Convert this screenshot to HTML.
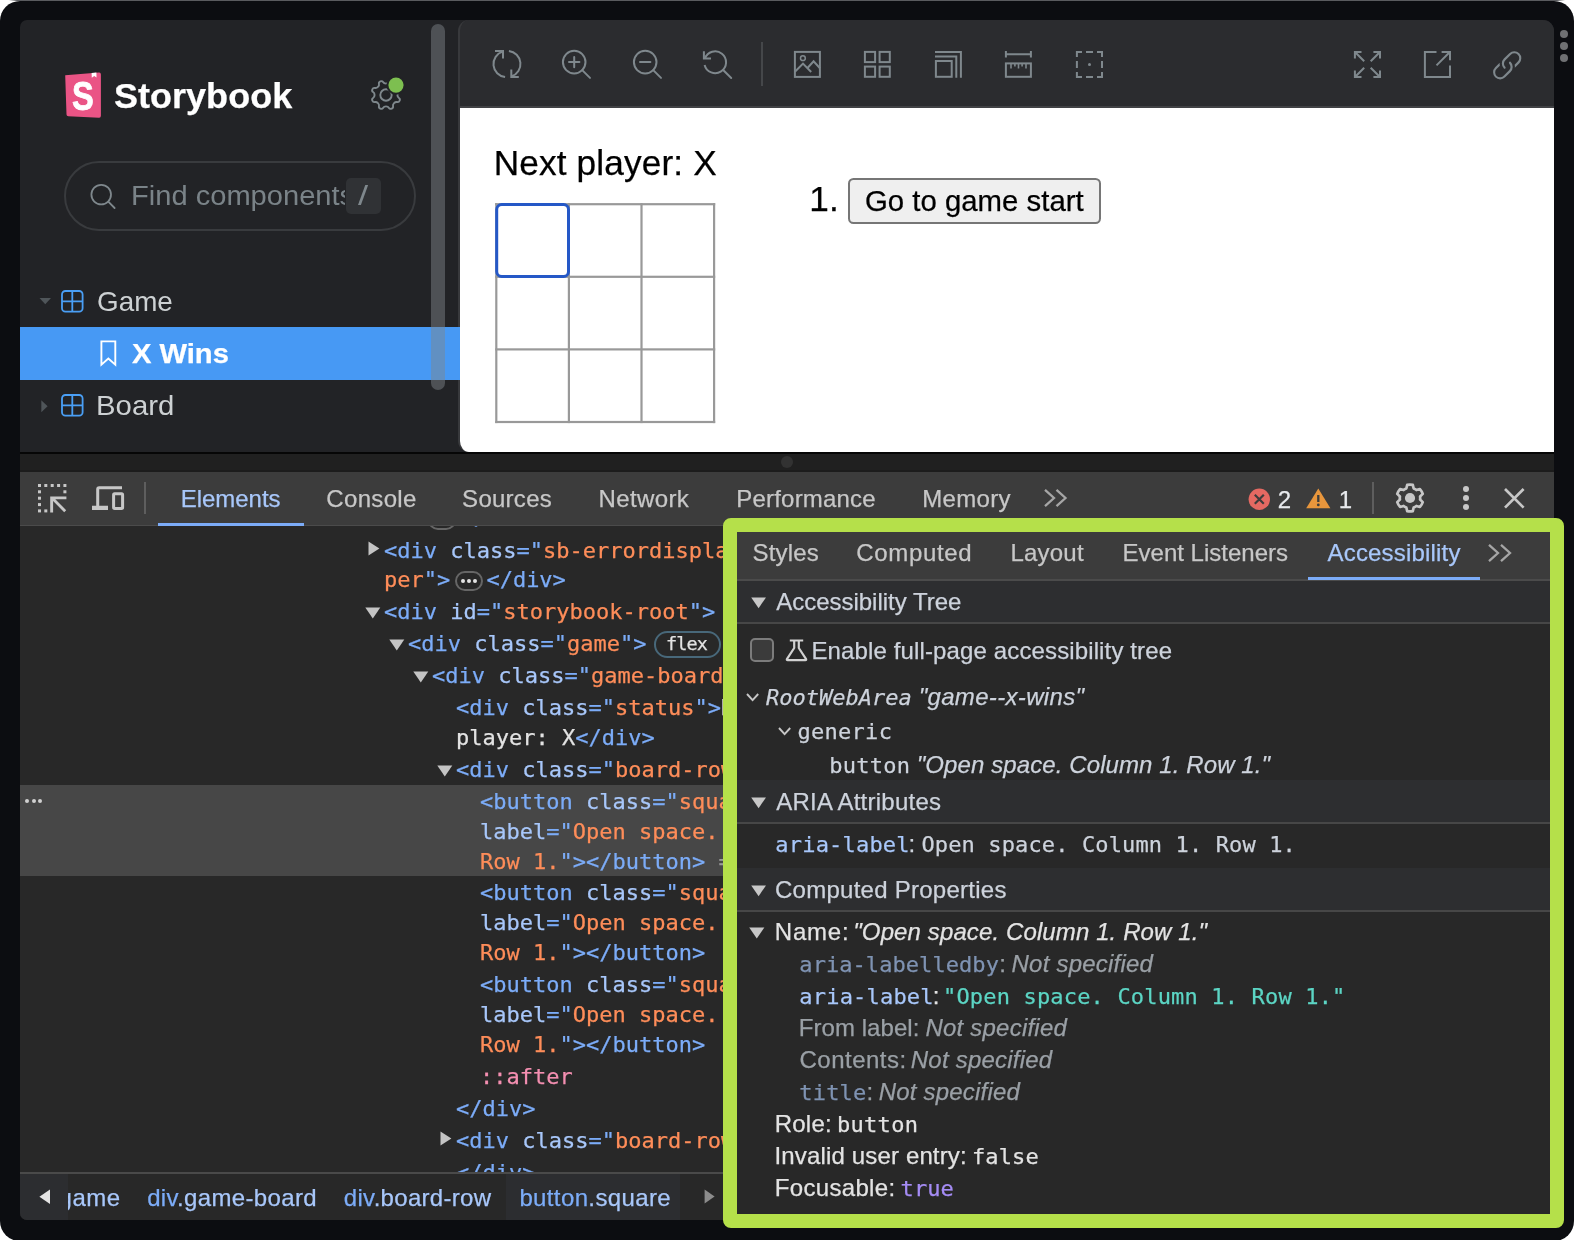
<!DOCTYPE html>
<html lang="en"><head><meta charset="utf-8"><title>Storybook</title><style>
html,body{margin:0;padding:0}
body{width:1574px;height:1240px;position:relative;overflow:hidden;background:#fff;font-family:"Liberation Sans",sans-serif}
#root{position:absolute;left:0;top:0;width:1574px;height:1240px;will-change:transform}
.a{position:absolute;box-sizing:border-box}
.t{position:absolute;white-space:pre;line-height:0;-webkit-text-stroke:0.25px}
.clip{position:absolute;overflow:hidden}
svg{overflow:visible}
</style></head><body>
<div id="root">
<div class="a" style="left:0px;top:0px;width:1574px;height:1px;background:linear-gradient(90deg,#fff 0,#fff 9px,#5a5b5f 17px,#5a5b5f 1557px,#fff 1565px);"></div>
<div class="a" style="left:0px;top:1px;width:1574px;height:1240px;background:#0c0d11;border-radius:20px;"></div>
<div class="a" style="left:20px;top:20px;width:1534px;height:432px;background:#222326;border-radius:7px 11px 0 0;"></div>
<div class="a" style="left:458px;top:20px;width:1096px;height:432px;background:#2b2c2f;border-radius:11px 11px 0 11px;overflow:hidden;border-left:2px solid #38393c;"><div class="a" style="left:0;top:86px;width:1100px;height:1.6px;background:#414245"></div><div class="a" style="left:0;top:87.6px;width:1100px;height:350px;background:#fff"></div></div>
<svg class="a" style="left:64px;top:71.5px;" width="37.5" height="46.5" viewBox="0 0 37.5 46.5"><path d="M1.2 3.2 L35 0.6 Q36.9 0.5 36.9 2.4 L36.9 43.8 Q36.9 45.8 35 45.7 L4.3 44.3 Q2.6 44.2 2.5 42.5 Z" fill="#ea5485"/><path d="M27.6 0.9 L32.4 0.6 L32.5 5.6 L30.2 3.9 L27.8 5.8 Z" fill="#fff"/></svg>
<div class="t" style="left:72.30px;top:96px;font:700 41px/0 'Liberation Sans',sans-serif;color:#fff;transform:scaleX(0.7971);transform-origin:0 0;-webkit-text-stroke:0.8px #fff;">S</div>
<div class="t" style="left:114.21px;top:96px;font:700 35.5px/0 'Liberation Sans',sans-serif;color:#fff;transform:scaleX(1.0151);transform-origin:0 0;">Storybook</div>
<svg class="a" style="left:369.5px;top:78.5px;" width="32" height="32" viewBox="0 0 32 32"><path d="M27.41 16.00 Q27.41 18.08 28.91 18.95 Q30.40 19.82 29.64 21.65 Q28.88 23.48 27.21 23.04 Q25.54 22.60 24.07 24.07 Q22.60 25.54 23.04 27.21 Q23.48 28.88 21.65 29.64 Q19.82 30.40 18.95 28.91 Q18.08 27.41 16.00 27.41 Q13.92 27.41 13.05 28.91 Q12.18 30.40 10.35 29.64 Q8.52 28.88 8.96 27.21 Q9.40 25.54 7.93 24.07 Q6.46 22.60 4.79 23.04 Q3.12 23.48 2.36 21.65 Q1.60 19.82 3.09 18.95 Q4.59 18.08 4.59 16.00 Q4.59 13.92 3.09 13.05 Q1.60 12.18 2.36 10.35 Q3.12 8.52 4.79 8.96 Q6.46 9.40 7.93 7.93 Q9.40 6.46 8.96 4.79 Q8.52 3.12 10.35 2.36 Q12.18 1.60 13.05 3.09 Q13.92 4.59 16.00 4.59 Q18.08 4.59 18.95 3.09 Q19.82 1.60 21.65 2.36 Q23.48 3.12 23.04 4.79 Q22.60 6.46 24.07 7.93 Q25.54 9.40 27.21 8.96 Q28.88 8.52 29.64 10.35 Q30.40 12.18 28.91 13.05 Q27.41 13.92 27.41 16.00Z" fill="none" stroke="#7f888d" stroke-width="1.9" stroke-linejoin="round"/><circle cx="16" cy="16" r="5.7" fill="none" stroke="#7f888d" stroke-width="1.9"/><circle cx="26" cy="6.1" r="9.6" fill="#222326"/><circle cx="26" cy="6.1" r="7.6" fill="#7dbf50"/></svg>
<div class="a" style="left:64px;top:161px;width:352px;height:70px;border:2px solid #393b3e;border-radius:35px;"></div>
<svg class="a" style="left:88px;top:181px;" width="30" height="30" viewBox="0 0 30 30"><circle cx="13.2" cy="13.6" r="9.8" fill="none" stroke="#7f888d" stroke-width="1.8"/><path d="M20.3 20.7 L26.6 27" stroke="#7f888d" stroke-width="1.8" stroke-linecap="round"/></svg>
<div class="clip" style="left:120px;top:170px;width:225px;height:50px">
<div class="t" style="left:11.27px;top:26px;font:400 27.5px/0 'Liberation Sans',sans-serif;color:#7a8388;transform:scaleX(1.0578);transform-origin:0 0;-webkit-text-stroke:0;">Find components</div>
</div>
<div class="a" style="left:346px;top:178px;width:35px;height:35.5px;background:#303235;border-radius:5px;"></div>
<div class="t" style="left:357.50px;top:196px;font:400 28px/0 'Liberation Sans',sans-serif;color:#7f888d;transform:scaleX(1.3008);transform-origin:0 0;-webkit-text-stroke:0;">/</div>
<svg class="a" style="left:38.5px;top:298px;" width="13" height="7" viewBox="0 0 13 7"><path d="M0.5 0H12L6.25 6.3Z" fill="#4f5559"/></svg>
<svg class="a" style="left:61px;top:290px;" width="23" height="23" viewBox="0 0 23 23"><rect x="1" y="1" width="20.6" height="20.6" rx="3.4" fill="none" stroke="#4a9ff5" stroke-width="1.8"/><path d="M11.3 1V21.6M1 11.3H21.6" stroke="#4a9ff5" stroke-width="1.8"/></svg>
<div class="t" style="left:96.51px;top:302px;font:400 28px/0 'Liberation Sans',sans-serif;color:#cdd1d3;transform:scaleX(0.9940);transform-origin:0 0;-webkit-text-stroke:0;">Game</div>
<div class="a" style="left:20px;top:327px;width:440px;height:53px;background:#4799f4;"></div>
<svg class="a" style="left:99.5px;top:339.5px;" width="17" height="27" viewBox="0 0 17 27"><path d="M1.4 1.4H15.3V24.6L8.35 18.6L1.4 24.6Z" fill="none" stroke="#fff" stroke-width="1.9" stroke-linejoin="miter"/></svg>
<div class="t" style="left:132.28px;top:354px;font:700 28px/0 'Liberation Sans',sans-serif;color:#fff;transform:scaleX(1.0407);transform-origin:0 0;">X Wins</div>
<svg class="a" style="left:41px;top:400px;" width="8" height="13" viewBox="0 0 8 13"><path d="M0.3 0.3V12.2L6.6 6.25Z" fill="#4f5559"/></svg>
<svg class="a" style="left:61px;top:394px;" width="23" height="23" viewBox="0 0 23 23"><rect x="1" y="1" width="20.6" height="20.6" rx="3.4" fill="none" stroke="#4a9ff5" stroke-width="1.8"/><path d="M11.3 1V21.6M1 11.3H21.6" stroke="#4a9ff5" stroke-width="1.8"/></svg>
<div class="t" style="left:95.55px;top:406px;font:400 28px/0 'Liberation Sans',sans-serif;color:#cdd1d3;transform:scaleX(1.0481);transform-origin:0 0;-webkit-text-stroke:0;">Board</div>
<div class="a" style="left:431px;top:24px;width:14px;height:366px;background:rgba(128,134,138,0.47);border-radius:7px;"></div>
<svg class="a" style="left:492.5px;top:50.4px;" width="28" height="28" viewBox="0 0 28 28"><g fill="none" stroke="#7f888d" stroke-width="2.0" stroke-linecap="butt" stroke-linejoin="miter"><path d="M12.1 27.1 A13.1 13.1 0 0 1 9.6 1.6"/><path d="M2 0.9H10V8.6"/><path d="M15.9 0.9 A13.1 13.1 0 0 1 18.6 26.3"/><path d="M18.3 19.4V27.1H25.8"/></g></svg>
<svg class="a" style="left:562px;top:50px;" width="28" height="28" viewBox="0 0 28 28"><g fill="none" stroke="#7f888d" stroke-width="2.0" stroke-linecap="butt" stroke-linejoin="miter"><circle cx="12.2" cy="12.1" r="11.3"/><path d="M20.2 20.1L28 27.9" stroke-linecap="round"/><path d="M7 12.1H17.4M12.2 6.9V17.3" stroke-linecap="round"/></g></svg>
<svg class="a" style="left:633px;top:50px;" width="28" height="28" viewBox="0 0 28 28"><g fill="none" stroke="#7f888d" stroke-width="2.0" stroke-linecap="butt" stroke-linejoin="miter"><circle cx="12.2" cy="12.1" r="11.3"/><path d="M20.2 20.1L28 27.9" stroke-linecap="round"/><path d="M7 12.1H17.4" stroke-linecap="round"/></g></svg>
<svg class="a" style="left:703px;top:50px;" width="28" height="28" viewBox="0 0 28 28"><g fill="none" stroke="#7f888d" stroke-width="2.0" stroke-linecap="butt" stroke-linejoin="miter"><path d="M1.9 8.6 A10.9 10.9 0 1 1 1.6 14.9"/><path d="M0.9 1.2V8.4H8"/><path d="M20.4 20.2L28.2 28" stroke-linecap="round"/></g></svg>
<div class="a" style="left:761px;top:42px;width:2px;height:44px;background:#45474a;"></div>
<svg class="a" style="left:794px;top:51px;" width="27" height="27" viewBox="0 0 27 27"><g fill="none" stroke="#7f888d" stroke-width="2.0" stroke-linecap="butt" stroke-linejoin="miter"><rect x="0.9" y="0.9" width="25" height="25"/><circle cx="8.9" cy="7.2" r="2.4" stroke-width="1.5"/><path d="M0.9 20.8L9 12.6L17.2 21"/><path d="M13.5 17L19.6 10.3L26 17.2"/></g></svg>
<svg class="a" style="left:864px;top:51px;" width="27" height="27" viewBox="0 0 27 27"><g fill="none" stroke="#7f888d" stroke-width="2.0" stroke-linecap="butt" stroke-linejoin="miter"><rect x="0.9" y="0.9" width="10.2" height="10.2"/><rect x="15.6" y="0.9" width="10.2" height="10.2"/><rect x="0.9" y="15.6" width="10.2" height="10.2"/><rect x="15.6" y="15.6" width="10.2" height="10.2"/></g></svg>
<svg class="a" style="left:935px;top:51px;" width="27" height="27" viewBox="0 0 27 27"><g fill="none" stroke="#7f888d" stroke-width="2.0" stroke-linecap="butt" stroke-linejoin="miter"><rect x="0.9" y="10" width="15.8" height="15.8"/><path d="M0 5.6H21.3V26.7"/><path d="M0 0.9H25.9V26.7"/></g></svg>
<svg class="a" style="left:1005px;top:51px;" width="27" height="27" viewBox="0 0 27 27"><g fill="none" stroke="#7f888d" stroke-width="2.0" stroke-linecap="butt" stroke-linejoin="miter"><path d="M0.9 0V6.6M25.9 0V6.6M0.9 3.3H25.9"/><rect x="0.9" y="12.4" width="25" height="13.4"/><path d="M6 12.4V17.5M9.9 12.4V15.6M13.5 12.4V17.5M17.1 12.4V15.6M21 12.4V17.5" stroke-width="1.6"/></g></svg>
<svg class="a" style="left:1076px;top:51px;" width="27" height="27" viewBox="0 0 27 27"><g fill="none" stroke="#7f888d" stroke-width="2.0" stroke-linecap="butt" stroke-linejoin="miter"><path d="M0.9 6V0.9H6M10 0.9H17M21 0.9H26V6M26 10V17M26 21V26H21M17 26H10M6 26H0.9V21M0.9 17V10"/><circle cx="13.5" cy="13.5" r="1.5" fill="#7f888d" stroke="none"/></g></svg>
<svg class="a" style="left:1354px;top:51px;" width="27" height="27" viewBox="0 0 27 27"><g fill="none" stroke="#7f888d" stroke-width="2.0" stroke-linecap="butt" stroke-linejoin="miter"><path d="M0.9 7.5V0.9H7.5M1.2 1.2L10.2 10.2"/><path d="M19.4 0.9H26V7.5M25.7 1.2L16.7 10.2"/><path d="M0.9 19.4V26H7.5M1.2 25.7L10.2 16.7"/><path d="M19.4 26H26V19.4M25.7 25.7L16.7 16.7"/></g></svg>
<svg class="a" style="left:1424px;top:51px;" width="27" height="27" viewBox="0 0 27 27"><g fill="none" stroke="#7f888d" stroke-width="2.0" stroke-linecap="butt" stroke-linejoin="miter"><path d="M12.5 0.9H0.9V26H26V14.4"/><path d="M17.6 0.9H26V9.3M25.6 1.3L12.5 14.4"/></g></svg>
<svg class="a" style="left:1492px;top:49.5px;" width="30.5" height="30.5" viewBox="0 0 14 14"><g fill="#7f888d"><path d="M11.84 2.16a2.25 2.25 0 0 0-3.18 0l-2.5 2.5c-.88.88-.88 2.3 0 3.18a.5.5 0 0 1-.7.7 3.25 3.25 0 0 1 0-4.59l2.5-2.5a3.25 3.25 0 0 1 4.59 4.6L10.48 8.1c.04-.44.01-.89-.09-1.32l1.45-1.45c.88-.88.88-2.3 0-3.18Z"/><path d="M3.6 7.2c-.1-.42-.12-.87-.08-1.31L1.45 7.95a3.25 3.25 0 1 0 4.6 4.6l2.5-2.5a3.25 3.25 0 0 0 0-4.6.5.5 0 0 0-.7.7c.87.89.87 2.31 0 3.19l-2.5 2.5a2.25 2.25 0 1 1-3.18-3.18L3.6 7.2Z"/></g></svg>
<div class="a" style="left:1560px;top:30px;width:8px;height:8px;background:#6f7073;border-radius:50%;"></div>
<div class="a" style="left:1560px;top:42px;width:8px;height:8px;background:#6f7073;border-radius:50%;"></div>
<div class="a" style="left:1560px;top:54px;width:8px;height:8px;background:#6f7073;border-radius:50%;"></div>
<div class="t" style="left:493.68px;top:163px;font:400 35.2px/0 'Liberation Sans',sans-serif;color:#000;letter-spacing:0.149px;">Next player: X</div>
<div class="t" style="left:809.36px;top:199px;font:400 35.2px/0 'Liberation Sans',sans-serif;color:#000;">1.</div>
<div class="a" style="left:848.3px;top:178.2px;width:252.4px;height:46.2px;background:#efefef;border:2.2px solid #767676;border-radius:5.5px;"></div>
<div class="t" style="left:865.03px;top:201px;font:400 29.33px/0 'Liberation Sans',sans-serif;color:#000;letter-spacing:0.013px;">Go to game start</div>
<svg class="a" style="left:0px;top:0px;" width="1574" height="1240" viewBox="0 0 1574 1240"><rect x="495.2" y="203.1" width="2.2" height="220.0" fill="#999"/><rect x="567.8" y="203.1" width="2.2" height="220.0" fill="#999"/><rect x="640.4" y="203.1" width="2.2" height="220.0" fill="#999"/><rect x="713.0" y="203.1" width="2.2" height="220.0" fill="#999"/><rect x="495.2" y="203.1" width="220.0" height="2.2" fill="#999"/><rect x="495.2" y="275.7" width="220.0" height="2.2" fill="#999"/><rect x="495.2" y="348.3" width="220.0" height="2.2" fill="#999"/><rect x="495.2" y="420.9" width="220.0" height="2.2" fill="#999"/><rect x="496.7" y="204.6" width="71.8" height="71.8" rx="5" fill="#fff" stroke="#2558c7" stroke-width="3"/></svg>
<div class="a" style="left:20px;top:452px;width:1534px;height:1.5px;background:#060606;"></div>
<div class="a" style="left:20px;top:453.5px;width:1534px;height:16.5px;background:#202020;"></div>
<div class="a" style="left:20px;top:470px;width:1534px;height:2px;background:#1c1c1c;"></div>
<div class="a" style="left:780.9px;top:455.9px;width:12px;height:12px;background:#323232;border-radius:50%;"></div>
<div class="a" style="left:20px;top:472px;width:1534px;height:748px;background:#282828;border-radius:0 0 7px 7px;"></div>
<div class="a" style="left:20px;top:472px;width:1534px;height:53px;background:#3c3c3c;"></div>
<div class="a" style="left:20px;top:524.6px;width:1534px;height:1.6px;background:#4b4b4b;"></div>
<svg class="a" style="left:37.7px;top:483.8px;" width="29" height="29" viewBox="0 0 29 29"><g fill="#c7c7c7"><rect x="0" y="0" width="3" height="3"/><rect x="6.3" y="0" width="3" height="3"/><rect x="12.7" y="0" width="3" height="3"/><rect x="19.1" y="0" width="3" height="3"/><rect x="25.4" y="0" width="3" height="3"/><rect x="0" y="6.3" width="3" height="3"/><rect x="0" y="12.7" width="3" height="3"/><rect x="0" y="19.1" width="3" height="3"/><rect x="0" y="25.4" width="3" height="3"/><rect x="6.3" y="25.4" width="3" height="3"/><rect x="25.4" y="6.3" width="3" height="3"/><path d="M12.2 12.4H28.4V15.3H17.3L28.2 26.2L26.2 28.2L15.1 17.1V28.4H12.2Z"/></g></svg>
<svg class="a" style="left:92px;top:486px;" width="33" height="25" viewBox="0 0 33 25"><g fill="#c7c7c7"><path d="M4.2 3.2A3 3 0 0 1 7.2 0.2H30V3.2H7.2V19.8H16V24H0V19.8H4.2Z"/><path fill-rule="evenodd" d="M22.6 6.3H29.6A2.5 2.5 0 0 1 32.1 8.8V21.5A2.5 2.5 0 0 1 29.6 24H22.6A2.5 2.5 0 0 1 20.1 21.5V8.8A2.5 2.5 0 0 1 22.6 6.3ZM23.1 9.3V21H29.1V9.3Z"/></g></svg>
<div class="a" style="left:144.1px;top:482px;width:1.9px;height:32px;background:#5e5e5e;"></div>
<div class="t" style="left:180.68px;top:499px;font:400 24px/0 'Liberation Sans',sans-serif;color:#a8c7fa;letter-spacing:-0.023px;">Elements</div>
<div class="a" style="left:158px;top:523px;width:146px;height:3.2px;background:#7cacf8;"></div>
<div class="t" style="left:326.30px;top:499px;font:400 24px/0 'Liberation Sans',sans-serif;color:#c7c7c7;letter-spacing:0.333px;">Console</div>
<div class="t" style="left:462.12px;top:499px;font:400 24px/0 'Liberation Sans',sans-serif;color:#c7c7c7;letter-spacing:0.266px;">Sources</div>
<div class="t" style="left:598.48px;top:499px;font:400 24px/0 'Liberation Sans',sans-serif;color:#c7c7c7;letter-spacing:0.388px;">Network</div>
<div class="t" style="left:736.28px;top:499px;font:400 24px/0 'Liberation Sans',sans-serif;color:#c7c7c7;letter-spacing:0.200px;">Performance</div>
<div class="t" style="left:922.28px;top:499px;font:400 24px/0 'Liberation Sans',sans-serif;color:#c7c7c7;letter-spacing:0.324px;">Memory</div>
<svg class="a" style="left:1044px;top:489px;" width="24" height="18" viewBox="0 0 24 18"><path d="M1 0.8L10 9L1 17.2M12.5 0.8L21.5 9L12.5 17.2" fill="none" stroke="#a6a6a6" stroke-width="2.3"/></svg>
<svg class="a" style="left:1247.5px;top:487.5px;" width="23" height="23" viewBox="0 0 23 23"><circle cx="11.3" cy="11.3" r="10.7" fill="#e46962"/><path d="M6.8 6.8L15.8 15.8M15.8 6.8L6.8 15.8" stroke="#3c3c3c" stroke-width="2.2"/></svg>
<div class="t" style="left:1277.80px;top:500px;font:400 24px/0 'Liberation Sans',sans-serif;color:#e8eaed;">2</div>
<svg class="a" style="left:1306.4px;top:488.4px;" width="25" height="21" viewBox="0 0 25 21"><path d="M12.3 0.4L24.4 20.2H0.2Z" fill="#e8963c"/><path d="M12.3 7V14" stroke="#3c3c3c" stroke-width="2.3"/><circle cx="12.3" cy="16.9" r="1.4" fill="#3c3c3c"/></svg>
<div class="t" style="left:1338.80px;top:500px;font:400 24px/0 'Liberation Sans',sans-serif;color:#e8eaed;">1</div>
<div class="a" style="left:1372px;top:482px;width:1.9px;height:32px;background:#5e5e5e;"></div>
<svg class="a" style="left:1395px;top:483px;" width="30" height="30" viewBox="0 0 30 30"><path d="M11.31 5.49L12.21 1.89A13.4 13.4 0 0 1 17.79 1.89L18.69 5.49A10.2 10.2 0 0 1 21.39 7.05L24.95 6.03A13.4 13.4 0 0 1 27.75 10.87L25.08 13.44A10.2 10.2 0 0 1 25.08 16.56L27.75 19.13A13.4 13.4 0 0 1 24.95 23.97L21.39 22.95A10.2 10.2 0 0 1 18.69 24.51L17.79 28.11A13.4 13.4 0 0 1 12.21 28.11L11.31 24.51A10.2 10.2 0 0 1 8.61 22.95L5.05 23.97A13.4 13.4 0 0 1 2.25 19.13L4.92 16.56A10.2 10.2 0 0 1 4.92 13.44L2.25 10.87A13.4 13.4 0 0 1 5.05 6.03L8.61 7.05A10.2 10.2 0 0 1 11.31 5.49Z" fill="none" stroke="#c7c7c7" stroke-width="2.7" stroke-linejoin="round"/><circle cx="15" cy="15" r="5.1" fill="#c7c7c7"/></svg>
<div class="a" style="left:1463.2px;top:485.5px;width:6.2px;height:6.2px;background:#c7c7c7;border-radius:50%;"></div>
<div class="a" style="left:1463.2px;top:495.1px;width:6.2px;height:6.2px;background:#c7c7c7;border-radius:50%;"></div>
<div class="a" style="left:1463.2px;top:504.3px;width:6.2px;height:6.2px;background:#c7c7c7;border-radius:50%;"></div>
<svg class="a" style="left:1504px;top:488px;" width="21" height="21" viewBox="0 0 21 21"><path d="M1 1L19.6 19.6M19.6 1L1 19.6" stroke="#c7c7c7" stroke-width="2.7" fill="none"/></svg>
<div class="clip" style="left:20px;top:526.2px;width:703px;height:645.8px">
<div class="a" style="left:0px;top:258.8px;width:703px;height:91px;background:#474747;"></div>
<div class="t" style="left:364.10px;top:-8px;font:400 22px/0 'DejaVu Sans Mono','Liberation Mono',monospace;color:#fe8d59;">r<span style="color:#7cacf8">"</span><span style="color:#7cacf8">&gt;</span></div>
<div class="a" style="left:408.2px;top:-16.3px;width:27.8px;height:19.8px;border:2px solid #666;border-radius:9.9px;"></div>
<div class="a" style="left:414.2px;top:-8.55px;width:3.9px;height:3.9px;background:#e3e3e3;border-radius:50%;"></div>
<div class="a" style="left:420.25px;top:-8.55px;width:3.9px;height:3.9px;background:#e3e3e3;border-radius:50%;"></div>
<div class="a" style="left:426.3px;top:-8.55px;width:3.9px;height:3.9px;background:#e3e3e3;border-radius:50%;"></div>
<div class="t" style="left:440.40px;top:-8px;font:400 22px/0 'DejaVu Sans Mono','Liberation Mono',monospace;color:#7cacf8;">&lt;/div&gt;</div>
<svg class="a" style="left:347.9px;top:15.2px;" width="12" height="16" viewBox="0 0 12 16"><path d="M0.5 0.5V14.5L11.4 7.5Z" fill="#c4c4c4"/></svg>
<div class="t" style="left:364.10px;top:25px;font:400 22px/0 'DejaVu Sans Mono','Liberation Mono',monospace;color:#7cacf8;">&lt;div<span style="color:#a8c7fa"> class</span>="<span style="color:#fe8d59">sb-errordisplay sb-wrap</span></div>
<div class="t" style="left:364.10px;top:54px;font:400 22px/0 'DejaVu Sans Mono','Liberation Mono',monospace;color:#fe8d59;">per<span style="color:#7cacf8">"</span><span style="color:#7cacf8">&gt;</span></div>
<div class="a" style="left:435px;top:45.2px;width:27.8px;height:19.8px;border:2px solid #666;border-radius:9.9px;"></div>
<div class="a" style="left:441px;top:52.95px;width:3.9px;height:3.9px;background:#e3e3e3;border-radius:50%;"></div>
<div class="a" style="left:447.05px;top:52.95px;width:3.9px;height:3.9px;background:#e3e3e3;border-radius:50%;"></div>
<div class="a" style="left:453.1px;top:52.95px;width:3.9px;height:3.9px;background:#e3e3e3;border-radius:50%;"></div>
<div class="t" style="left:466.40px;top:54px;font:400 22px/0 'DejaVu Sans Mono','Liberation Mono',monospace;color:#7cacf8;">&lt;/div&gt;</div>
<svg class="a" style="left:344.5px;top:80.6px;" width="16" height="12" viewBox="0 0 16 12"><path d="M0.3 0.6H15.3L7.8 11.6Z" fill="#c4c4c4"/></svg>
<div class="t" style="left:364.10px;top:86px;font:400 22px/0 'DejaVu Sans Mono','Liberation Mono',monospace;color:#7cacf8;">&lt;div<span style="color:#a8c7fa"> id</span>="<span style="color:#fe8d59">storybook-root</span>"&gt;</div>
<svg class="a" style="left:368.5px;top:112.6px;" width="16" height="12" viewBox="0 0 16 12"><path d="M0.3 0.6H15.3L7.8 11.6Z" fill="#c4c4c4"/></svg>
<div class="t" style="left:388.10px;top:118px;font:400 22px/0 'DejaVu Sans Mono','Liberation Mono',monospace;color:#7cacf8;">&lt;div<span style="color:#a8c7fa"> class</span>="<span style="color:#fe8d59">game</span>"&gt;</div>
<div class="a" style="left:633.8px;top:104.8px;width:67.6px;height:26.6px;border:2px solid #48687a;border-radius:13.3px;"></div>
<div class="t" style="left:646.04px;top:118px;font:400 18.5px/0 'DejaVu Sans Mono','Liberation Mono',monospace;color:#e3e3e3;letter-spacing:-0.899px;">flex</div>
<svg class="a" style="left:392.5px;top:144.6px;" width="16" height="12" viewBox="0 0 16 12"><path d="M0.3 0.6H15.3L7.8 11.6Z" fill="#c4c4c4"/></svg>
<div class="t" style="left:412.10px;top:150px;font:400 22px/0 'DejaVu Sans Mono','Liberation Mono',monospace;color:#7cacf8;">&lt;div<span style="color:#a8c7fa"> class</span>="<span style="color:#fe8d59">game-board</span>"&gt;</div>
<div class="t" style="left:436.10px;top:182px;font:400 22px/0 'DejaVu Sans Mono','Liberation Mono',monospace;color:#7cacf8;">&lt;div<span style="color:#a8c7fa"> class</span>="<span style="color:#fe8d59">status</span>"&gt;<span style="color:#e3e3e3">Next</span></div>
<div class="t" style="left:436.10px;top:212px;font:400 22px/0 'DejaVu Sans Mono','Liberation Mono',monospace;color:#e3e3e3;">player: X<span style="color:#7cacf8">&lt;/div&gt;</span></div>
<svg class="a" style="left:416.5px;top:238.6px;" width="16" height="12" viewBox="0 0 16 12"><path d="M0.3 0.6H15.3L7.8 11.6Z" fill="#c4c4c4"/></svg>
<div class="t" style="left:436.10px;top:244px;font:400 22px/0 'DejaVu Sans Mono','Liberation Mono',monospace;color:#7cacf8;">&lt;div<span style="color:#a8c7fa"> class</span>="<span style="color:#fe8d59">board-row</span>"&gt;</div>
<div class="t" style="left:460.10px;top:276px;font:400 22px/0 'DejaVu Sans Mono','Liberation Mono',monospace;color:#7cacf8;">&lt;button<span style="color:#a8c7fa"> class</span>="<span style="color:#fe8d59">square</span>"<span style="color:#a8c7fa"> aria-</span></div>
<div class="t" style="left:460.10px;top:306px;font:400 22px/0 'DejaVu Sans Mono','Liberation Mono',monospace;color:#a8c7fa;">label<span style="color:#7cacf8">="</span><span style="color:#fe8d59">Open space. Column 1.</span></div>
<div class="t" style="left:460.10px;top:336px;font:400 22px/0 'DejaVu Sans Mono','Liberation Mono',monospace;color:#fe8d59;">Row 1.<span style="color:#7cacf8">"</span><span style="color:#7cacf8">&gt;</span><span style="color:#7cacf8">&lt;/button&gt;</span><span style="color:#9a9a9a"> == </span><span style="color:#9a9a9a">$0</span></div>
<div class="a" style="left:5px;top:273px;width:4px;height:4px;background:#d0d0d0;border-radius:50%;"></div>
<div class="a" style="left:11.6px;top:273px;width:4px;height:4px;background:#d0d0d0;border-radius:50%;"></div>
<div class="a" style="left:18.2px;top:273px;width:4px;height:4px;background:#d0d0d0;border-radius:50%;"></div>
<div class="t" style="left:460.10px;top:367px;font:400 22px/0 'DejaVu Sans Mono','Liberation Mono',monospace;color:#7cacf8;">&lt;button<span style="color:#a8c7fa"> class</span>="<span style="color:#fe8d59">square</span>"<span style="color:#a8c7fa"> aria-</span></div>
<div class="t" style="left:460.10px;top:397px;font:400 22px/0 'DejaVu Sans Mono','Liberation Mono',monospace;color:#a8c7fa;">label<span style="color:#7cacf8">="</span><span style="color:#fe8d59">Open space. Column 1.</span></div>
<div class="t" style="left:460.10px;top:427px;font:400 22px/0 'DejaVu Sans Mono','Liberation Mono',monospace;color:#fe8d59;">Row 1.<span style="color:#7cacf8">"</span><span style="color:#7cacf8">&gt;</span><span style="color:#7cacf8">&lt;/button&gt;</span></div>
<div class="t" style="left:460.10px;top:459px;font:400 22px/0 'DejaVu Sans Mono','Liberation Mono',monospace;color:#7cacf8;">&lt;button<span style="color:#a8c7fa"> class</span>="<span style="color:#fe8d59">square</span>"<span style="color:#a8c7fa"> aria-</span></div>
<div class="t" style="left:460.10px;top:489px;font:400 22px/0 'DejaVu Sans Mono','Liberation Mono',monospace;color:#a8c7fa;">label<span style="color:#7cacf8">="</span><span style="color:#fe8d59">Open space. Column 1.</span></div>
<div class="t" style="left:460.10px;top:519px;font:400 22px/0 'DejaVu Sans Mono','Liberation Mono',monospace;color:#fe8d59;">Row 1.<span style="color:#7cacf8">"</span><span style="color:#7cacf8">&gt;</span><span style="color:#7cacf8">&lt;/button&gt;</span></div>
<div class="t" style="left:460.10px;top:551px;font:400 22px/0 'DejaVu Sans Mono','Liberation Mono',monospace;color:#f48fb1;">::after</div>
<div class="t" style="left:436.10px;top:583px;font:400 22px/0 'DejaVu Sans Mono','Liberation Mono',monospace;color:#7cacf8;">&lt;/div&gt;</div>
<svg class="a" style="left:419.9px;top:605.2px;" width="12" height="16" viewBox="0 0 12 16"><path d="M0.5 0.5V14.5L11.4 7.5Z" fill="#c4c4c4"/></svg>
<div class="t" style="left:436.10px;top:615px;font:400 22px/0 'DejaVu Sans Mono','Liberation Mono',monospace;color:#7cacf8;">&lt;div<span style="color:#a8c7fa"> class</span>="<span style="color:#fe8d59">board-row</span>"&gt;</div>
<div class="t" style="left:436.10px;top:647px;font:400 22px/0 'DejaVu Sans Mono','Liberation Mono',monospace;color:#7cacf8;">&lt;/div&gt;</div>
</div>
<div class="a" style="left:20px;top:1172px;width:1534px;height:1.7px;background:#4a4a4a;"></div>
<div class="a" style="left:20px;top:1173.7px;width:48px;height:46.3px;background:#2c2d30;border-radius:0 0 0 7px;"></div>
<svg class="a" style="left:38.5px;top:1188.5px;" width="12" height="16" viewBox="0 0 12 16"><path d="M11 0.4V15L0.4 7.7Z" fill="#e3e3e3"/></svg>
<div class="clip" style="left:68px;top:1174px;width:655px;height:46px">
<div class="t" style="left:-9.46px;top:24px;font:400 24px/0 'Liberation Sans',sans-serif;color:#a8c7fa;letter-spacing:0.490px;">game</div>
<div class="t" style="left:79.14px;top:24px;font:400 24px/0 'Liberation Sans',sans-serif;color:#7cacf8;letter-spacing:0.347px;">div<span style="color:#a8c7fa">.game-board</span></div>
<div class="t" style="left:275.84px;top:24px;font:400 24px/0 'Liberation Sans',sans-serif;color:#7cacf8;letter-spacing:0.304px;">div<span style="color:#a8c7fa">.board-row</span></div>
<div class="a" style="left:438px;top:0px;width:174px;height:46px;background:#2c2d30;"></div>
<div class="t" style="left:451.40px;top:24px;font:400 24px/0 'Liberation Sans',sans-serif;color:#7cacf8;letter-spacing:0.372px;">button<span style="color:#a8c7fa">.square</span></div>
</div>
<svg class="a" style="left:703.5px;top:1189px;" width="12" height="16" viewBox="0 0 12 16"><path d="M0.6 0.6V14.6L10.6 7.6Z" fill="#8c8c8c"/></svg>
<div class="a" style="left:737px;top:532px;width:813px;height:681px;background:#282828;"></div>
<div class="a" style="left:737px;top:532px;width:813px;height:47.3px;background:#3c3c3c;"></div>
<div class="a" style="left:737px;top:579.2px;width:813px;height:1.6px;background:#4b4b4b;"></div>
<div class="t" style="left:752.42px;top:553px;font:400 24px/0 'Liberation Sans',sans-serif;color:#c7c7c7;letter-spacing:0.216px;">Styles</div>
<div class="t" style="left:856.30px;top:553px;font:400 24px/0 'Liberation Sans',sans-serif;color:#c7c7c7;letter-spacing:0.657px;">Computed</div>
<div class="t" style="left:1010.38px;top:553px;font:400 24px/0 'Liberation Sans',sans-serif;color:#c7c7c7;letter-spacing:0.236px;">Layout</div>
<div class="t" style="left:1122.58px;top:553px;font:400 24px/0 'Liberation Sans',sans-serif;color:#c7c7c7;">Event Listeners</div>
<div class="t" style="left:1327.50px;top:553px;font:400 24px/0 'Liberation Sans',sans-serif;color:#a8c7fa;letter-spacing:0.185px;">Accessibility</div>
<div class="a" style="left:1308px;top:576.6px;width:172px;height:3.4px;background:#7cacf8;"></div>
<svg class="a" style="left:1488px;top:543.5px;" width="25" height="18" viewBox="0 0 25 18"><path d="M1 0.8L10 9L1 17.2M13 0.8L22 9L13 17.2" fill="none" stroke="#a6a6a6" stroke-width="2.3"/></svg>
<div class="a" style="left:737px;top:580.8px;width:813px;height:41.4px;background:#2d2e30;"></div>
<div class="a" style="left:737px;top:622.2px;width:813px;height:1.6px;background:#474747;"></div>
<svg class="a" style="left:750.6px;top:597.3px;" width="16" height="12" viewBox="0 0 16 12"><path d="M0.2 0.4H15L7.6 11.2Z" fill="#c7c7c7"/></svg>
<div class="t" style="left:776.20px;top:602px;font:400 24px/0 'Liberation Sans',sans-serif;color:#cdd3dc;letter-spacing:-0.013px;">Accessibility Tree</div>
<div class="a" style="left:750.1px;top:638px;width:23.8px;height:23.8px;background:#3b3b3b;border:2px solid #7c7c7c;border-radius:5px;"></div>
<svg class="a" style="left:784.5px;top:638.8px;" width="23" height="23" viewBox="0 0 23 23"><path d="M4.8 1.5H18.2M9.2 1.5V9L1.9 20.2Q1.5 21.2 2.6 21.2H20.4Q21.5 21.2 21.1 20.2L13.8 9V1.5" fill="none" stroke="#d2d2d2" stroke-width="2.2" stroke-linejoin="round"/></svg>
<div class="t" style="left:811.48px;top:651px;font:400 24px/0 'Liberation Sans',sans-serif;color:#cdd3dc;letter-spacing:0.129px;">Enable full-page accessibility tree</div>
<svg class="a" style="left:746.2px;top:693px;" width="14" height="9" viewBox="0 0 14 9"><path d="M1 1L6.6 7.2L12.2 1" fill="none" stroke="#c7c7c7" stroke-width="1.9"/></svg>
<div class="t" style="left:765.89px;top:698px;font:italic 400 22px/0 'DejaVu Sans Mono','Liberation Mono',monospace;color:#cdd3dc;letter-spacing:0.005px;">RootWebArea</div>
<div class="t" style="left:918.64px;top:697px;font:italic 400 24px/0 'Liberation Sans',sans-serif;color:#cdd3dc;letter-spacing:0.333px;">"game--x-wins"</div>
<svg class="a" style="left:778.4px;top:727px;" width="14" height="9" viewBox="0 0 14 9"><path d="M1 1L6.6 7.2L12.2 1" fill="none" stroke="#c7c7c7" stroke-width="1.9"/></svg>
<div class="t" style="left:797.48px;top:732px;font:400 22px/0 'DejaVu Sans Mono','Liberation Mono',monospace;color:#cdd3dc;letter-spacing:0.284px;">generic</div>
<div class="t" style="left:829.37px;top:766px;font:400 22px/0 'DejaVu Sans Mono','Liberation Mono',monospace;color:#cdd3dc;letter-spacing:0.255px;">button</div>
<div class="t" style="left:916.74px;top:765px;font:italic 400 24px/0 'Liberation Sans',sans-serif;color:#cdd3dc;letter-spacing:0.096px;">"Open space. Column 1. Row 1."</div>
<div class="a" style="left:737px;top:780px;width:813px;height:42px;background:#2d2e30;"></div>
<div class="a" style="left:737px;top:822px;width:813px;height:1.6px;background:#474747;"></div>
<svg class="a" style="left:750.6px;top:796.8px;" width="16" height="12" viewBox="0 0 16 12"><path d="M0.2 0.4H15L7.6 11.2Z" fill="#c7c7c7"/></svg>
<div class="t" style="left:776.20px;top:802px;font:400 24px/0 'Liberation Sans',sans-serif;color:#cdd3dc;letter-spacing:0.246px;">ARIA Attributes</div>
<div class="t" style="left:775.33px;top:845px;font:400 22px/0 'DejaVu Sans Mono','Liberation Mono',monospace;color:#a8c7fa;letter-spacing:0.198px;">aria-label</div>
<div class="t" style="left:908.44px;top:844px;font:400 24px/0 'Liberation Sans',sans-serif;color:#cdd3dc;">:</div>
<div class="t" style="left:921.39px;top:845px;font:400 22px/0 'DejaVu Sans Mono','Liberation Mono',monospace;color:#cdd3dc;letter-spacing:0.131px;">Open space. Column 1. Row 1.</div>
<div class="a" style="left:737px;top:867.5px;width:813px;height:42.5px;background:#2d2e30;"></div>
<div class="a" style="left:737px;top:910px;width:813px;height:1.6px;background:#474747;"></div>
<svg class="a" style="left:750.6px;top:884.55px;" width="16" height="12" viewBox="0 0 16 12"><path d="M0.2 0.4H15L7.6 11.2Z" fill="#c7c7c7"/></svg>
<div class="t" style="left:775.00px;top:890px;font:400 24px/0 'Liberation Sans',sans-serif;color:#cdd3dc;letter-spacing:0.258px;">Computed Properties</div>
<svg class="a" style="left:749px;top:926.6px;" width="16" height="12" viewBox="0 0 16 12"><path d="M0.2 0.4H15.4L7.8 11.4Z" fill="#c7c7c7"/></svg>
<div class="t" style="left:774.78px;top:932px;font:400 24px/0 'Liberation Sans',sans-serif;color:#e3e3e3;letter-spacing:0.800px;">Name:</div>
<div class="t" style="left:853.24px;top:932px;font:italic 400 24px/0 'Liberation Sans',sans-serif;color:#e3e3e3;letter-spacing:0.113px;">"Open space. Column 1. Row 1."</div>
<div class="t" style="left:799.33px;top:965px;font:400 22px/0 'DejaVu Sans Mono','Liberation Mono',monospace;color:#7f93b3;letter-spacing:0.063px;">aria-labelledby</div>
<div class="t" style="left:999.34px;top:964px;font:400 24px/0 'Liberation Sans',sans-serif;color:#9aa0a6;">:</div>
<div class="t" style="left:1011.58px;top:964px;font:italic 400 24px/0 'Liberation Sans',sans-serif;color:#9aa0a6;letter-spacing:0.211px;">Not specified</div>
<div class="t" style="left:799.33px;top:997px;font:400 22px/0 'DejaVu Sans Mono','Liberation Mono',monospace;color:#a8c7fa;letter-spacing:0.198px;">aria-label</div>
<div class="t" style="left:932.64px;top:996px;font:400 24px/0 'Liberation Sans',sans-serif;color:#e3e3e3;">:</div>
<div class="t" style="left:942.97px;top:997px;font:400 22px/0 'DejaVu Sans Mono','Liberation Mono',monospace;color:#5cd5c4;letter-spacing:0.172px;">"Open space. Column 1. Row 1."</div>
<div class="t" style="left:798.78px;top:1028px;font:400 24px/0 'Liberation Sans',sans-serif;color:#9aa0a6;letter-spacing:0.061px;">From label:</div>
<div class="t" style="left:925.38px;top:1028px;font:italic 400 24px/0 'Liberation Sans',sans-serif;color:#9aa0a6;letter-spacing:0.228px;">Not specified</div>
<div class="t" style="left:799.50px;top:1060px;font:400 24px/0 'Liberation Sans',sans-serif;color:#9aa0a6;letter-spacing:0.492px;">Contents:</div>
<div class="t" style="left:910.78px;top:1060px;font:italic 400 24px/0 'Liberation Sans',sans-serif;color:#9aa0a6;letter-spacing:0.219px;">Not specified</div>
<div class="t" style="left:799.33px;top:1093px;font:400 22px/0 'DejaVu Sans Mono','Liberation Mono',monospace;color:#7f93b3;letter-spacing:0.178px;">title</div>
<div class="t" style="left:866.44px;top:1092px;font:400 24px/0 'Liberation Sans',sans-serif;color:#9aa0a6;">:</div>
<div class="t" style="left:878.78px;top:1092px;font:italic 400 24px/0 'Liberation Sans',sans-serif;color:#9aa0a6;letter-spacing:0.194px;">Not specified</div>
<div class="t" style="left:774.78px;top:1124px;font:400 24px/0 'Liberation Sans',sans-serif;color:#e3e3e3;letter-spacing:0.210px;">Role:</div>
<div class="t" style="left:836.97px;top:1125px;font:400 22px/0 'DejaVu Sans Mono','Liberation Mono',monospace;color:#e3e3e3;letter-spacing:0.295px;">button</div>
<div class="t" style="left:774.54px;top:1156px;font:400 24px/0 'Liberation Sans',sans-serif;color:#e3e3e3;letter-spacing:0.150px;">Invalid user entry:</div>
<div class="t" style="left:971.91px;top:1157px;font:400 22px/0 'DejaVu Sans Mono','Liberation Mono',monospace;color:#e3e3e3;letter-spacing:0.157px;">false</div>
<div class="t" style="left:774.78px;top:1188px;font:400 24px/0 'Liberation Sans',sans-serif;color:#e3e3e3;letter-spacing:0.328px;">Focusable:</div>
<div class="t" style="left:900.62px;top:1189px;font:400 22px/0 'DejaVu Sans Mono','Liberation Mono',monospace;color:#a58cf5;letter-spacing:0.058px;">true</div>
<div class="a" style="left:723px;top:518px;width:841px;height:709.5px;border:14px solid #b5e04a;border-radius:8px;"></div>
</div>
</body></html>
